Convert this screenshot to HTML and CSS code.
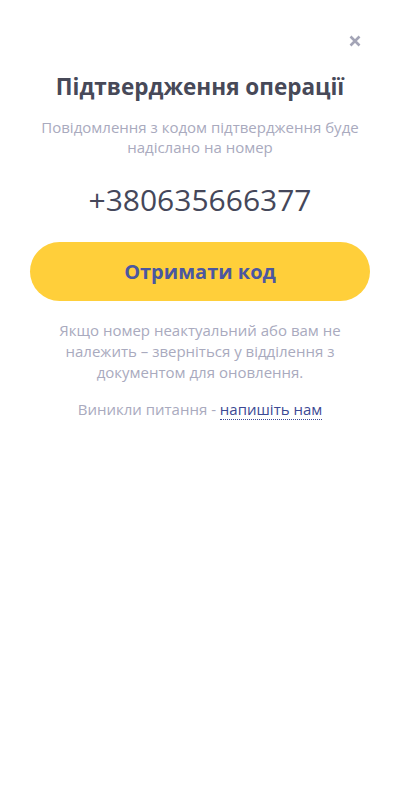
FILE: index.html
```html
<!DOCTYPE html>
<html lang="uk">
<head>
<meta charset="utf-8">
<link rel="stylesheet" href="styles.css">
</head>
<body>
<div class="modal">
  <div class="topbar">
    <button class="close" aria-label="Закрити">
      <svg width="12" height="12" viewBox="0 0 12 12"><path d="M1.5 1.5L10.5 10.5M10.5 1.5L1.5 10.5" stroke="#a3a4b6" stroke-width="2.6" stroke-linecap="butt"/></svg>
    </button>
  </div>
  <h1 class="title">Підтвердження операції</h1>
  <p class="subtitle">Повідомлення з кодом підтвердження буде надіслано на номер</p>
  <div class="phone">+380635666377</div>
  <button class="btn">Отримати код</button>
  <p class="note">Якщо номер неактуальний або вам не належить – зверніться у відділення з документом для оновлення.</p>
  <p class="help">Виникли питання - <a class="link" href="#">напишіть нам</a></p>
</div>
</body>
</html>
```
FILE: styles.css
```css
* { box-sizing: border-box; }
html, body { margin: 0; padding: 0; background: #fff; }
body { font-family: "Open Sans", "Noto Sans", sans-serif; }
.modal {
  display: flex;
  flex-direction: column;
  align-items: center;
  padding: 32px 24px 0 30px;
}
.topbar {
  align-self: stretch;
  display: flex;
  justify-content: flex-end;
  padding-right: 9px;
}
.close {
  border: 0;
  background: none;
  padding: 0;
  width: 12px;
  height: 12px;
  margin-top: 3px;
  display: flex;
}
.title {
  margin: 25px 0 0;
  font-size: 22.5px;
  font-weight: 700;
  color: #474958;
  line-height: 30px;
  text-align: center;
}
.subtitle {
  margin: 15px 0 0;
  font-size: 15px;
  line-height: 20px;
  color: #a9aabe;
  text-align: center;
  padding: 0 6px;
}
.phone {
  margin-top: 24px;
  font-size: 30px;
  line-height: 38px;
  color: #45475a;
  text-align: center;
}
.btn {
  margin-top: 23px;
  width: 340px;
  height: 59px;
  border: 0;
  border-radius: 30px;
  background: #ffcf3a;
  color: #4b57a0;
  font-family: inherit;
  font-size: 20px;
  font-weight: 700;
}
.note {
  margin: 19px 0 0;
  font-size: 15px;
  line-height: 21px;
  color: #a9aabe;
  text-align: center;
  padding: 0 22px;
}
.help {
  margin: 16px 0 0;
  font-size: 15px;
  line-height: 21px;
  color: #a9aabe;
  text-align: center;
}
.link {
  color: #3d4a94;
  text-decoration: none;
  border-bottom: 1px dotted #3d4a94;
}
```
